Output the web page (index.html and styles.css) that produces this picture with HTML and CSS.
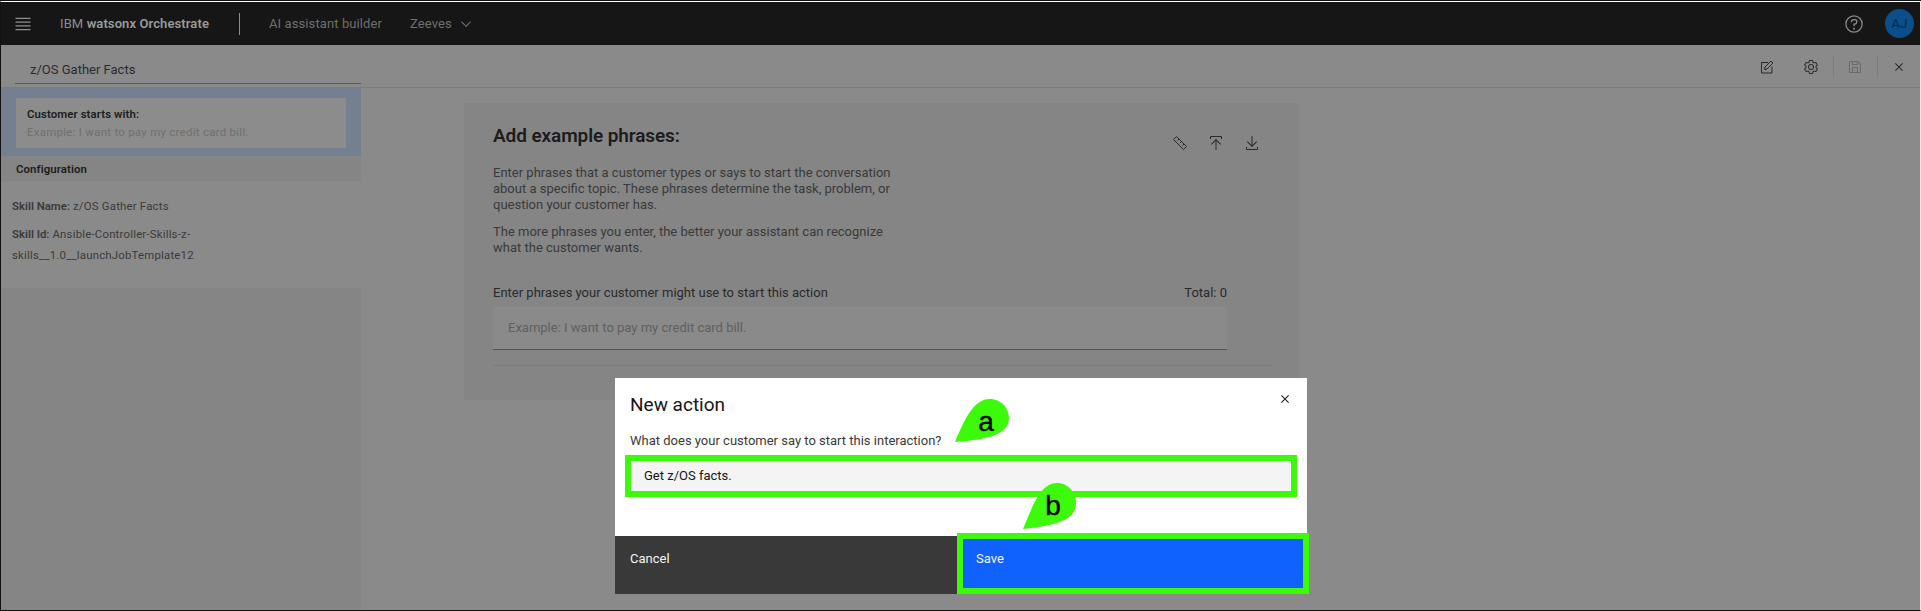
FILE: index.html
```html
<!DOCTYPE html>
<html lang="en">
<head>
<meta charset="utf-8">
<title>z/OS Gather Facts</title>
<link rel="stylesheet" href="styles.css">
</head>
<body>
<div class="app">
  <header class="topbar">
    <svg class="ico menu" viewBox="0 0 32 32"><path d="M4 6H28V8H4zM4 24H28V26H4zM4 12H28V14H4zM4 18H28V20H4z"/></svg>
    <div class="brand">IBM <b>watsonx Orchestrate</b></div>
    <div class="crumb">AI assistant builder</div>
    <div class="crumb2">Zeeves</div>
    <svg class="ico chev" viewBox="0 0 32 32"><path d="M16 22L6 12 7.4 10.6 16 19.2 24.6 10.6 26 12z"/></svg>
    <svg class="ico help" viewBox="0 0 32 32"><path d="M16,2A14,14,0,1,0,30,16,14,14,0,0,0,16,2Zm0,26A12,12,0,1,1,28,16,12,12,0,0,1,16,28Z"/><circle cx="16" cy="23.5" r="1.5"/><path d="M17,8H15.5A4.49,4.49,0,0,0,11,12.5V13h2v-.5A2.5,2.5,0,0,1,15.5,10H17a2.5,2.5,0,0,1,0,5H15v4.5h2V17a4.5,4.5,0,0,0,0-9Z"/></svg>
    <div class="avatar">AJ</div>
  </header>

  <div class="toolbar">
    <div class="title">z/OS Gather Facts</div>
    <div class="tools">
      <svg class="tool stroked" viewBox="0 0 32 32"><path d="M18 7H5v21h21V15"/><path d="M11 21l1-5L24 4l4 4-12 12z"/></svg>
      <svg class="tool" viewBox="0 0 32 32"><path d="M27,16.76c0-.25,0-.5,0-.76s0-.51,0-.77l1.92-1.68A2,2,0,0,0,29.3,11L26.94,7a2,2,0,0,0-1.73-1,2,2,0,0,0-.64.1l-2.43.82a11.35,11.35,0,0,0-1.31-.75l-.51-2.52a2,2,0,0,0-2-1.61H13.64a2,2,0,0,0-2,1.61l-.51,2.52a11.48,11.48,0,0,0-1.32.75L7.43,6.06A2,2,0,0,0,6.79,6,2,2,0,0,0,5.06,7L2.7,11a2,2,0,0,0,.41,2.51L5,15.24c0,.25,0,.5,0,.76s0,.51,0,.77L3.11,18.45A2,2,0,0,0,2.7,21L5.06,25a2,2,0,0,0,1.73,1,2,2,0,0,0,.64-.1l2.43-.82a11.35,11.35,0,0,0,1.31.75l.51,2.52a2,2,0,0,0,2,1.61h4.72a2,2,0,0,0,2-1.61l.51-2.52a11.48,11.48,0,0,0,1.32-.75l2.42.82a2,2,0,0,0,.64.1,2,2,0,0,0,1.73-1L29.3,21a2,2,0,0,0-.41-2.51ZM25.21,24l-3.43-1.16a8.86,8.86,0,0,1-2.71,1.57L18.36,28H13.64l-.71-3.55a9.36,9.36,0,0,1-2.7-1.57L6.79,24,4.43,20l2.72-2.4a8.9,8.9,0,0,1,0-3.13L4.43,12,6.79,8l3.43,1.16a8.86,8.86,0,0,1,2.71-1.57L13.64,4h4.72l.71,3.55a9.36,9.36,0,0,1,2.7,1.57L25.21,8,27.57,12l-2.72,2.4a8.9,8.9,0,0,1,0,3.13L27.57,20Z"/><path d="M16,22a6,6,0,1,1,6-6A5.94,5.94,0,0,1,16,22Zm0-10a3.91,3.91,0,0,0-4,4,3.91,3.91,0,0,0,4,4,3.91,3.91,0,0,0,4-4A3.91,3.91,0,0,0,16,12Z"/></svg>
      <span class="vline"></span>
      <svg class="tool muted" viewBox="0 0 32 32"><path d="M27.71,9.29l-5-5A1,1,0,0,0,22,4H6A2,2,0,0,0,4,6V26a2,2,0,0,0,2,2H26a2,2,0,0,0,2-2V10A1,1,0,0,0,27.71,9.29ZM12,6h8v4H12Zm8,20H12V18h8Zm2,0V18a2,2,0,0,0-2-2H12a2,2,0,0,0-2,2v8H6V6h4v4a2,2,0,0,0,2,2h8a2,2,0,0,0,2-2V6.41l4,4V26Z"/></svg>
      <span class="vline"></span>
      <svg class="tool" viewBox="0 0 32 32"><path d="M24 9.4L22.6 8 16 14.6 9.4 8 8 9.4 14.6 16 8 22.6 9.4 24 16 17.4 22.6 24 24 22.6 17.4 16 24 9.4z"/></svg>
    </div>
  </div>

  <main class="workspace">
    <aside class="side">
      <div class="step">
        <div class="stepbox">
          <div class="steplabel">Customer starts with:</div>
          <div class="stepph">Example: I want to pay my credit card bill.</div>
        </div>
      </div>
      <div class="confhead">Configuration</div>
      <div class="conf">
        <p class="confline"><b>Skill Name:</b> z/OS Gather Facts</p>
        <p class="confline"><b>Skill Id:</b> Ansible-Controller-Skills-z-skills__1.0__launchJobTemplate12</p>
      </div>
      <div class="sidefill"></div>
    </aside>

    <section class="content">
      <div class="card">
        <div class="cardtop">
          <div class="cardintro">
            <h2 class="cardtitle">Add example phrases:</h2>
            <p class="para">Enter phrases that a customer types or says to start the conversation about a specific topic. These phrases determine the task, problem, or question your customer has.</p>
            <p class="para">The more phrases you enter, the better your assistant can recognize what the customer wants.</p>
          </div>
          <div class="cardicons">
            <svg class="cardico stroked" viewBox="0 0 32 32"><path d="M3 9l6-6 20 20-6 6z"/><path d="M11 11l3-3M16 16l3-3M21 21l3-3"/></svg>
            <svg class="cardico" viewBox="0 0 32 32"><path d="M6 18L7.41 19.41 15 11.83 15 30 17 30 17 11.83 24.59 19.41 26 18 16 8 6 18z"/><path d="M6 8V4H26V8H28V4a2 2 0 00-2-2H6A2 2 0 004 4V8z"/></svg>
            <svg class="cardico" viewBox="0 0 32 32"><path d="M26 24v4H6V24H4v4H4a2 2 0 002 2H26a2 2 0 002-2h0V24zM26 14L24.59 12.59 17 20.17 17 2 15 2 15 20.17 7.41 12.59 6 14 16 24 26 14z"/></svg>
          </div>
        </div>
        <div class="fieldhead"><span>Enter phrases your customer might use to start this action</span><span>Total: 0</span></div>
        <div class="field">Example: I want to pay my credit card bill.</div>
        <div class="rule"></div>
      </div>
    </section>
  </main>

  <div class="modal">
    <div class="modalhead">New action</div>
    <svg class="modalclose" viewBox="0 0 32 32"><path d="M24 9.4L22.6 8 16 14.6 9.4 8 8 9.4 14.6 16 8 22.6 9.4 24 16 17.4 22.6 24 24 22.6 17.4 16 24 9.4z"/></svg>
    <div class="modallabel">What does your customer say to start this interaction?</div>
    <div class="modalinput">Get z/OS facts.</div>
    <div class="modalfoot">
      <div class="btn cancel">Cancel</div>
      <div class="btn save">Save</div>
    </div>
  </div>

  <svg class="drop drop-a" viewBox="0 0 54 43"><path d="M0 43C8 25 17 0 35 0 46 0 54 9 54 19 54 38 25 41 0 43Z"/><text x="31" y="32">a</text></svg>
  <svg class="drop drop-b" viewBox="0 0 53 46"><path d="M0 46C8 28 16 0 34 0 45 0 53 9 53 20 53 40 25 43 0 46Z"/><text x="30" y="32">b</text></svg>
</div>
</body>
</html>
```

FILE: styles.css
```css
* { box-sizing: border-box; }
html, body { margin: 0; padding: 0; }
body { font-family: Roboto, "Liberation Sans", sans-serif; background: #111; }
.app {
  position: relative;
  width: 1921px;
  height: 610px;
  margin-top: 1px;
  display: flex;
  flex-direction: column;
  overflow: hidden;
  background: #8a8a8a;
  border-top: 1px solid #fff;
  border-left: 1px solid #111;
  border-right: 1px solid #e8e8e8;
  border-bottom: 1px solid #111;
}
.ico { width: 16px; height: 16px; fill: #8d8d8d; flex: none; }
.topbar {
  height: 43px;
  flex: none;
  display: flex;
  align-items: center;
  background: #161616;
  color: #8d8d8d;
  font-size: 13px;
  letter-spacing: .1px;
  white-space: nowrap;
}
.menu { width: 20px; height: 20px; margin-left: 12px; }
.brand { margin-left: 27px; width: 180px; color: #8d8d8d; border-right: 1px solid #8d8d8d; line-height: 22px; }
.brand b { font-weight: 600; color: #9a9a9a; }
.crumb { margin-left: 29px; width: 110px; color: #6f6f6f; }
.crumb2 { margin-left: 31px; color: #6f6f6f; }
.chev { margin-left: 6px; fill: #6f6f6f; }
.help { width: 20px; height: 20px; margin-left: auto; }
.avatar {
  width: 29px; height: 29px; margin: 0 6px 0 21px;
  border-radius: 50%;
  background: #0b4f8a;
  color: #06294a;
  font-size: 13px;
  display: flex; align-items: center; justify-content: center;
}
.toolbar {
  height: 43px;
  flex: none;
  display: flex;
  align-items: stretch;
  justify-content: space-between;
  border-bottom: 1px solid #7c7c7c;
}
.title {
  width: 346px;
  height: 39px;
  margin-left: 14px;
  padding: 12px 0 0 15px;
  border-bottom: 1px solid #555;
  font-size: 13px;
  line-height: 26px;
  color: #2a2a2a;
}
.tools { display: flex; align-items: center; padding-top: 2px; margin-right: -1px; }
.tool { width: 16px; height: 16px; fill: #2a2a2a; margin: 0 14px; }
.stroked { fill: none; stroke: #2a2a2a; stroke-width: 2; }
.muted { fill: #6a6a6a; }
.vline { width: 1px; height: 22px; background: #7c7c7c; margin: 0 -1px 2px 0; }
.workspace { flex: 1; display: flex; min-height: 0; }
.side { width: 360px; flex: none; display: flex; flex-direction: column; }
.step { height: 68px; padding: 10px 15px 8px 15px; background: #74808f; flex: none; }
.stepbox { height: 50px; background: #8c8c8c; padding: 8px 11px 0; }
.steplabel { font-size: 11.4px; font-weight: 600; color: #1c1c1c; line-height: 17px; letter-spacing: .1px; }
.stepph { font-size: 11.4px; color: #6f6f6f; line-height: 19px; letter-spacing: .3px; }
.confhead { height: 25px; flex: none; background: #858585; padding: 2px 0 0 15px; font-size: 11.4px; font-weight: 600; line-height: 23px; letter-spacing: .1px; color: #1c1c1c; }
.conf { height: 107px; flex: none; padding: 15px 11px 0; width: 222px; }
.confline { margin: 0 0 7px; font-size: 11.4px; line-height: 21px; letter-spacing: .2px; color: #3a3a3a; }
.confline b { font-weight: 600; letter-spacing: 0; }
.sidefill { flex: 1; background: #858585; }
.content { flex: 1; padding: 15px 0 0 103px; }
.card {
  width: 835px;
  height: 297px;
  background: #858585;
  padding: 19px 28px 0 29px;
}
.cardtop { display: flex; justify-content: space-between; }
.cardintro { width: 410px; }
.cardtitle { margin: 0 0 15px; font-size: 19px; line-height: 28px; letter-spacing: -.1px; font-weight: 600; color: #1c1c1c; }
.para { margin: 0 0 11px; font-size: 13px; line-height: 16px; color: #3a3a3a; }
.cardicons { display: flex; gap: 20px; padding: 13px 11px 0 0; height: 40px; }
.cardico { width: 16px; height: 16px; fill: #2a2a2a; }
.stroked.cardico { fill: none; }
.fieldhead { width: 734px; display: flex; justify-content: space-between; margin-top: 18px; font-size: 13px; line-height: 16px; color: #2a2a2a; }
.field { width: 734px; height: 43px; margin-top: 6px; background: #8a8a8a; border-bottom: 1px solid #555; padding-left: 15px; line-height: 42px; font-size: 13px; color: #5f5f5f; }
.rule { width: 778px; height: 1px; margin-top: 15px; background: #7c7c7c; }

.modal {
  position: absolute;
  left: 614px;
  top: 376px;
  width: 692px;
  height: 216px;
  background: #fff;
  display: flex;
  flex-direction: column;
}
.modalhead { font-size: 19px; line-height: 28px; color: #161616; margin: 13px 0 0 15px; }
.modalclose { position: absolute; right: 14px; top: 13px; width: 16px; height: 16px; fill: #161616; }
.modallabel { font-size: 13px; line-height: 18px; color: #393939; margin: 13px 0 0 15px; }
.modalinput {
  margin: 11px 16px 0;
  height: 30px;
  background: #f4f4f4;
  outline: 6px solid #3cfa0a;
  padding-left: 13px;
  font-size: 13px;
  line-height: 30px;
  color: #161616;
}
.modalfoot { margin-top: auto; height: 58px; display: flex; }
.btn { font-size: 13px; color: #f4f4f4; }
.cancel { width: 342px; flex: none; background: #393939; padding: 14px 15px; line-height: 18px; }
.save {
  width: 352px;
  height: 61px;
  margin-top: -3px;
  flex: none;
  position: relative;
  background: #0f62fe;
  border: 6px solid #3cfa0a;
  padding: 11px 13px;
  line-height: 18px;
}
.drop { position: absolute; fill: #3cfa0a; }
.drop text { font-family: "Liberation Sans", sans-serif; font-size: 28px; fill: #000; stroke: #000; stroke-width: .4; text-anchor: middle; }
.drop-a { left: 954px; top: 397px; width: 54px; height: 43px; }
.drop-b { left: 1022px; top: 481px; width: 53px; height: 46px; }
```
